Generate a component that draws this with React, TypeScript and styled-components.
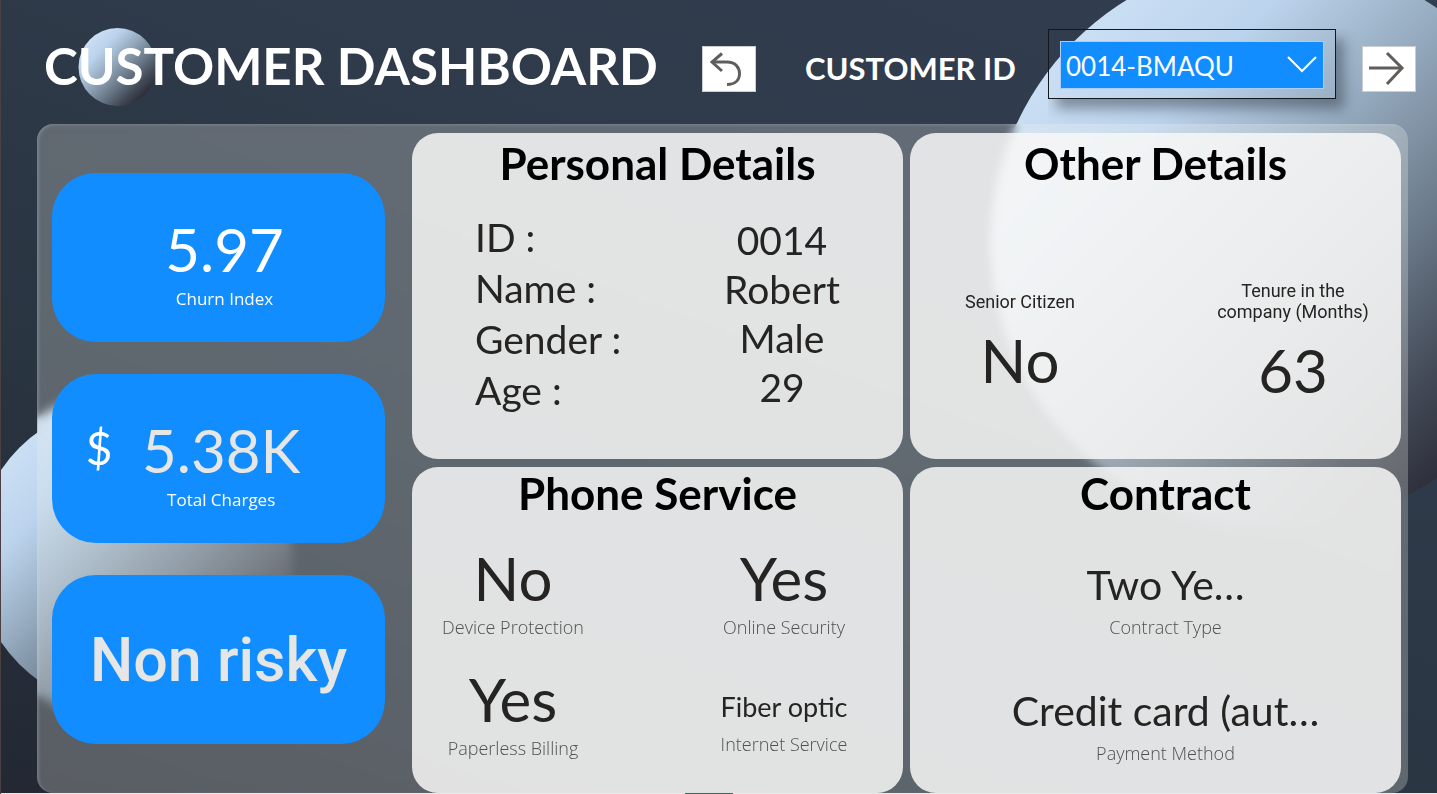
import React, { useState } from "react";
import styled, { createGlobalStyle } from "styled-components";

const GlobalStyle = createGlobalStyle`
  *, *::before, *::after { box-sizing: border-box; }
  body { margin: 0; background: #2a3442; }
  h1, h2, p, ul { margin: 0; padding: 0; }
`;

const display = `"Lato", "Liberation Sans", sans-serif`;
const caption = `"Open Sans", "Noto Sans", sans-serif`;
const din = `"Roboto", "Liberation Sans", sans-serif`;

const Page = styled.div`
  position: relative;
  display: grid;
  grid-template-rows: auto 1fr auto;
  min-height: 100vh;
  overflow: hidden;
  isolation: isolate;
  border-left: 1px solid #4a3f42;
  background: linear-gradient(200deg, #323e51 0%, #2f3a4a 35%, #2a3542 65%, #232833 100%);
  font-family: ${display};
`;

const Backdrop = styled.svg`
  position: absolute;
  inset: 0;
  z-index: -1;
  width: 100%;
  height: 100%;
`;

const Header = styled.header`
  display: flex;
  align-items: center;
  height: 124px;
  padding: 4px 21px 0 43px;
`;

const Title = styled.h1`
  flex: 1;
  padding-top: 4px;
  color: #fff;
  font-size: 51px;
  line-height: 64px;
  font-weight: 700;
  white-space: nowrap;
`;

const IconButton = styled.button`
  display: grid;
  place-items: center;
  width: 54px;
  height: 46px;
  margin: 10px 0 0;
  padding: 0;
  border: 1px solid #c9ced4;
  background: #fff;
  cursor: pointer;
`;

const SlicerLabel = styled.label`
  flex: 0 0 243px;
  margin-left: 49px;
  padding-top: 8px;
  color: #fff;
  font-size: 31px;
  line-height: 40px;
  font-weight: 700;
  white-space: nowrap;
`;

const Slicer = styled.div`
  position: relative;
  width: 288px;
  height: 70px;
  margin-right: 26px;
  padding: 11px;
  border: 1px solid #14181d;
  box-shadow: 8px 10px 12px rgba(20, 28, 40, 0.4);
  clip-path: inset(0 -30px -30px 0);
  background: transparent;
`;

const Select = styled.select`
  display: block;
  width: 264px;
  height: 48px;
  padding: 2px 44px 0 5px;
  appearance: none;
  border: 1px solid #a9cdf3;
  border-radius: 0;
  background: #118dff;
  color: #fff;
  font-family: ${display};
  font-size: 26px;
`;

const Chevron = styled.svg`
  position: absolute;
  top: 24px;
  right: 17px;
  pointer-events: none;
`;

const Panel = styled.main`
  position: relative;
  display: grid;
  grid-template-columns: 333px 1fr;
  column-gap: 27px;
  margin: 0 29px 0 36px;
  padding: 9px 7px 0 15px;
  border-radius: 16px;
  overflow: hidden;
  isolation: isolate;
  background: rgba(248, 246, 241, 0.26);
  backdrop-filter: blur(5px);
  box-shadow: inset 2px 1px 3px rgba(200, 225, 240, 0.22);
`;

const KpiColumn = styled.section`
  display: flex;
  flex-direction: column;
  gap: 32px;
  padding-top: 40px;
`;

const Kpi = styled.article`
  height: 169px;
  padding: 40px 0 0 12px;
  border-radius: 44px;
  background: #118dff;
  text-align: center;
`;

const PrefixedKpi = styled(Kpi)`
  display: grid;
  grid-template-columns: 90px 1fr 90px;
  align-content: start;
  padding-left: 0;
`;

const StatusKpi = styled(Kpi)`
  display: grid;
  align-content: center;
  padding: 0;
`;

const KpiPrefix = styled.span`
  padding-left: 4px;
  color: #fff;
  font-size: 46px;
  line-height: 68px;
`;

const KpiValue = styled.p<{ $muted?: boolean }>`
  color: ${(p) => (p.$muted ? "#e6e6e6" : "#fff")};
  font-size: 60px;
  line-height: 72px;
  white-space: nowrap;
`;

const KpiCaption = styled.p`
  padding-top: 2px;
  color: #fff;
  font-family: ${caption};
  font-size: 17px;
  line-height: 24px;
  white-space: nowrap;
`;

const RiskStatus = styled.p`
  color: #e6e6e6;
  font-family: ${din};
  font-size: 61px;
  line-height: 72px;
  font-weight: 500;
  white-space: nowrap;
`;

const Cards = styled.div`
  display: grid;
  grid-template-columns: 1fr 1fr;
  grid-auto-rows: minmax(326px, 1fr);
  gap: 8px 7px;
`;

const Card = styled.section<{ $inset?: boolean }>`
  padding-left: ${(p) => (p.$inset ? 20 : 0)}px;
  border-radius: 26px;
  background: rgba(247, 247, 247, 0.86);
  color: #252423;
`;

const CardTitle = styled.h2<{ $tight?: boolean }>`
  color: #000;
  font-size: 44px;
  line-height: ${(p) => (p.$tight ? 52 : 60)}px;
  font-weight: 700;
  text-align: center;
`;

const Person = styled.div`
  display: flex;
  justify-content: space-between;
  align-items: center;
  padding: 19px 20px 0 63px;
  font-size: 39px;
`;

const PersonLabels = styled.ul`
  list-style: none;
  line-height: 51px;
`;

const PersonValues = styled.ul`
  list-style: none;
  width: 202px;
  line-height: 49px;
  text-align: center;
`;

const Facts = styled.div`
  display: flex;
  justify-content: space-between;
  align-items: center;
  padding: 87px 18px 0 20px;
`;

const Fact = styled.div`
  width: 180px;
  text-align: center;
`;

const FactLabel = styled.p`
  color: #252423;
  font-family: ${din};
  font-size: 18px;
  line-height: 21px;
`;

const FactValue = styled.p`
  padding-top: 12px;
  font-size: 60px;
  line-height: 72px;
`;

const Services = styled.div`
  display: grid;
  grid-template-columns: 202px 202px;
  justify-content: space-between;
  row-gap: 24px;
  padding: 23px 18px 0 0;
`;

const Service = styled.div<{ $small?: boolean }>`
  align-self: end;
  padding-bottom: ${(p) => (p.$small ? 4 : 0)}px;
  text-align: center;
`;

const sizes = {
  large: { font: 60, line: 73, gap: 0 },
  medium: { font: 41, line: 54, gap: 3 },
  small: { font: 27, line: 36, gap: 7 },
};

const MetricValue = styled.p<{ $size: keyof typeof sizes }>`
  padding-bottom: ${(p) => sizes[p.$size].gap}px;
  font-size: ${(p) => sizes[p.$size].font}px;
  line-height: ${(p) => sizes[p.$size].line}px;
  white-space: nowrap;
`;

const MetricCaption = styled.p`
  color: #525050;
  font-family: ${caption};
  font-weight: 300;
  font-size: 18px;
  line-height: 24px;
`;

const ContractList = styled.div`
  display: grid;
  row-gap: 45px;
  padding-top: 39px;
  text-align: center;
`;

const TabStrip = styled.footer`
  display: grid;
  height: 1px;
  background: #e9e9e9;
  grid-template-columns: 684fr 49fr 704fr;
`;

const ActiveTab = styled.span`
  grid-column: 2;
  background: #217a5b;
`;

const ids = ["0014-BMAQU"];

const services = [
  { value: "No", label: "Device Protection" },
  { value: "Yes", label: "Online Security" },
  { value: "Yes", label: "Paperless Billing" },
  { value: "Fiber optic", label: "Internet Service", small: true },
];

const contract = [
  { value: "Two Ye…", label: "Contract Type" },
  { value: "Credit card (aut…", label: "Payment Method" },
];

function Spheres() {
  return (
    <Backdrop viewBox="0 0 1437 794" preserveAspectRatio="xMidYMid slice" aria-hidden="true">
      <defs>
        <linearGradient id="sphere" x1="0.146" y1="0.146" x2="0.854" y2="0.854">
          <stop offset="0" stopColor="#cbdff4" />
          <stop offset="0.2" stopColor="#bbd3ec" />
          <stop offset="0.42" stopColor="#96abbf" />
          <stop offset="0.65" stopColor="#6c7b8b" />
          <stop offset="0.85" stopColor="#444b58" />
          <stop offset="1" stopColor="#2c2e39" />
        </linearGradient>
        <filter id="soft" x="-10%" y="-10%" width="120%" height="120%">
          <feGaussianBlur stdDeviation="2" />
        </filter>
        <clipPath id="underPanel">
          <rect x="37" y="124" width="1371" height="670" />
        </clipPath>
      </defs>
      <circle cx="1275" cy="243" r="285" fill="url(#sphere)" />
      <circle cx="127" cy="556" r="153" fill="url(#sphere)" />
      <g clipPath="url(#underPanel)">
        <circle cx="127" cy="556" r="165" fill="url(#sphere)" filter="url(#soft)" />
      </g>
      <circle cx="117" cy="67" r="39" fill="url(#sphere)" />
    </Backdrop>
  );
}

export default function App() {
  const [customer, setCustomer] = useState(ids[0]);
  return (
    <>
      <GlobalStyle />
      <Page>
        <Spheres />
        <Header>
          <Title>CUSTOMER DASHBOARD</Title>
          <IconButton type="button" aria-label="Back">
            <svg width="40" height="40" viewBox="0 0 40 40" fill="none" stroke="#605e5c" strokeWidth="3">
              <path d="M13 4.500 3 13l10 9" />
              <path d="M3 13H18C26 13 30.500 18 30.500 24.500S26 35.500 18 35.500" />
            </svg>
          </IconButton>
          <SlicerLabel htmlFor="customer">CUSTOMER ID</SlicerLabel>
          <Slicer>
            <Select id="customer" value={customer} onChange={(e) => setCustomer(e.target.value)}>
              {ids.map((id) => (
                <option key={id}>{id}</option>
              ))}
            </Select>
            <Chevron width="32" height="20" viewBox="0 0 32 20" fill="none" stroke="#fff" strokeWidth="2">
              <path d="M2 3l14 14L30 3" />
            </Chevron>
          </Slicer>
          <IconButton type="button" aria-label="Next">
            <svg width="40" height="40" viewBox="0 0 40 40" fill="none" stroke="#605e5c" strokeWidth="3">
              <path d="M0 19h33" />
              <path d="M18 4l15 15-15 16" />
            </svg>
          </IconButton>
        </Header>

        <Panel>
          <KpiColumn>
            <Kpi>
              <KpiValue>5.97</KpiValue>
              <KpiCaption>Churn Index</KpiCaption>
            </Kpi>
            <PrefixedKpi>
              <KpiPrefix>$</KpiPrefix>
              <div>
                <KpiValue $muted>5.38K</KpiValue>
                <KpiCaption>Total Charges</KpiCaption>
              </div>
            </PrefixedKpi>
            <StatusKpi>
              <RiskStatus>Non risky</RiskStatus>
            </StatusKpi>
          </KpiColumn>

          <Cards>
            <Card>
              <CardTitle>Personal Details</CardTitle>
              <Person>
                <PersonLabels>
                  <li>ID :</li>
                  <li>Name :</li>
                  <li>Gender :</li>
                  <li>Age :</li>
                </PersonLabels>
                <PersonValues>
                  <li>0014</li>
                  <li>Robert</li>
                  <li>Male</li>
                  <li>29</li>
                </PersonValues>
              </Person>
            </Card>

            <Card>
              <CardTitle>Other Details</CardTitle>
              <Facts>
                <Fact>
                  <FactLabel>Senior Citizen</FactLabel>
                  <FactValue>No</FactValue>
                </Fact>
                <Fact>
                  <FactLabel>Tenure in the company (Months)</FactLabel>
                  <FactValue>63</FactValue>
                </Fact>
              </Facts>
            </Card>

            <Card>
              <CardTitle $tight>Phone Service</CardTitle>
              <Services>
                {services.map((s) => (
                  <Service key={s.label} $small={s.small}>
                    <MetricValue $size={s.small ? "small" : "large"}>{s.value}</MetricValue>
                    <MetricCaption>{s.label}</MetricCaption>
                  </Service>
                ))}
              </Services>
            </Card>

            <Card $inset>
              <CardTitle $tight>Contract</CardTitle>
              <ContractList>
                {contract.map((c) => (
                  <div key={c.label}>
                    <MetricValue $size="medium">{c.value}</MetricValue>
                    <MetricCaption>{c.label}</MetricCaption>
                  </div>
                ))}
              </ContractList>
            </Card>
          </Cards>
        </Panel>
        <TabStrip>
          <ActiveTab />
        </TabStrip>
      </Page>
    </>
  );
}
